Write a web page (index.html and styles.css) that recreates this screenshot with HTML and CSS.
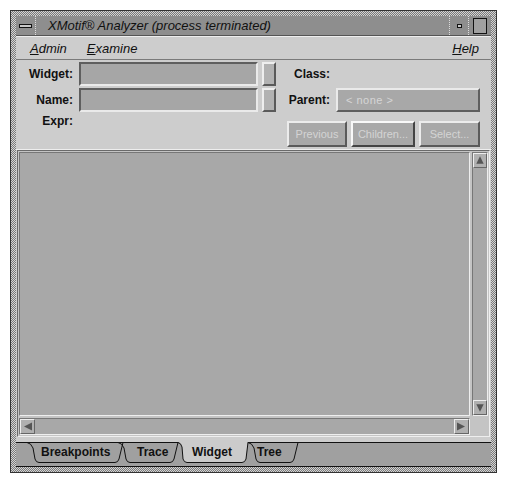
FILE: index.html
```html
<!DOCTYPE html>
<html lang="en">
<head>
    <meta charset="UTF-8">
    <title>XMotif Analyzer</title>
    <link rel="stylesheet" href="styles.css">
</head>
<body>
    <div class="window">
        <div class="titlebar">
            <div class="wm-btn menu-btn"><span class="dash"></span></div>
            <div class="title">XMotif® Analyzer (process terminated)</div>
            <div class="wm-btn min-btn"><span class="dot"></span></div>
            <div class="wm-btn max-btn"><span class="box"></span></div>
        </div>
        <div class="client">
            <div class="menubar">
                <span class="menu"><u>A</u>dmin</span>
                <span class="menu"><u>E</u>xamine</span>
                <span class="menu help"><u>H</u>elp</span>
            </div>

            <div class="form">
                <div class="left-col">
                    <div class="row">
                        <label class="lbl">Widget:</label>
                        <div class="field"></div>
                        <div class="side-btn"></div>
                    </div>
                    <div class="row">
                        <label class="lbl">Name:</label>
                        <div class="field"></div>
                        <div class="side-btn"></div>
                    </div>
                    <div class="row expr-row">
                        <label class="lbl">Expr:</label>
                    </div>
                </div>
                <div class="right-col">
                    <div class="row">
                        <label class="lbl rlbl">Class:</label>
                    </div>
                    <div class="row">
                        <label class="lbl rlbl">Parent:</label>
                        <div class="field parent-field"><span class="disabled">&lt; none &gt;</span></div>
                    </div>
                    <div class="row btn-row">
                        <div class="pbtn prev">Previous</div>
                        <div class="pbtn children">Children...</div>
                        <div class="pbtn select">Select...</div>
                    </div>
                </div>
            </div>

            <div class="scrolled">
                <div class="view-row">
                    <div class="canvas"></div>
                    <div class="vscroll">
                        <div class="arrow"><svg width="13" height="13" viewBox="0 0 13 13"><path d="M6.5 2 L10.5 10 L2.5 10 Z" fill="#555"/></svg></div>
                        <div class="track"></div>
                        <div class="arrow"><svg width="13" height="13" viewBox="0 0 13 13"><path d="M2.5 3 L10.5 3 L6.5 11 Z" fill="#555"/></svg></div>
                    </div>
                </div>
                <div class="hscroll-row">
                    <div class="hscroll">
                        <div class="arrow"><svg width="13" height="13" viewBox="0 0 13 13"><path d="M11 2.5 L11 10.5 L3 6.5 Z" fill="#555"/></svg></div>
                        <div class="track"></div>
                        <div class="arrow"><svg width="13" height="13" viewBox="0 0 13 13"><path d="M2 2.5 L2 10.5 L10 6.5 Z" fill="#555"/></svg></div>
                    </div>
                    <div class="corner"></div>
                </div>
            </div>

            <div class="tabstrip">
                <svg class="tab-shapes" width="475" height="27" viewBox="0 0 475 27">
                    <path d="M0 2.5 H475" stroke="#111" stroke-width="1"/>
                    <path d="M162 0 H232 L230 19 Q229 22.5 226 22.5 H171 Q168 22.5 167 19 L166 7 Q165 2.5 162 2.5 Z" fill="#cbcbcb"/>
                    <path d="M162 2.5 Q165 3 166 7 L167 19 Q168 22.5 171 22.5 H226 Q229 22.5 230 19 L232 2.5" fill="none" stroke="#111"/>
                    <path d="M11 2.5 Q15 3 17 8 L19 19 Q20 22.5 23 22.5 H99 Q102 22.5 103 19 L107 2.5" fill="none" stroke="#111"/>
                    <path d="M102 2.5 Q106 3 108 8 L110 19 Q111 22.5 114 22.5 H154 Q157 22.5 158 19 L162 2.5" fill="none" stroke="#111"/>
                    <path d="M232 2.5 Q236 3 238 8 L240 19 Q241 22.5 244 22.5 H274 Q277 22.5 278 19 L282 2.5" fill="none" stroke="#111"/>
                </svg>
                <div class="tab-labels">
                    <span class="tab t1">Breakpoints</span>
                    <span class="tab t2">Trace</span>
                    <span class="tab t3">Widget</span>
                    <span class="tab t4">Tree</span>
                </div>
            </div>
        </div>
    </div>
</body>
</html>
```

FILE: styles.css
```css
* {
    box-sizing: border-box;
}

body {
    margin: 0;
    background: #fff;
    font-family: 'Liberation Sans', Arial, sans-serif;
}

.window {
    margin: 10px;
    width: 487px;
    height: 463px;
    padding: 5px;
    border: 1px solid #333;
    background: repeating-conic-gradient(#7a7a7a 0 25%, #d4d4d4 0 50%) 0 0 / 2px 2px;
    display: flex;
    flex-direction: column;
}

/* title bar */
.titlebar {
    height: 20px;
    display: flex;
    align-items: stretch;
    background: #8e8e8e;
    border-bottom: 1px solid #555;
}

.wm-btn {
    display: flex;
    align-items: center;
    justify-content: center;
    background: #8e8e8e;
}

.menu-btn {
    width: 20px;
    border-right: 1px dotted #ddd;
}

.menu-btn .dash {
    width: 13px;
    height: 4px;
    border: 1px solid #111;
    background: #c8c8c8;
}

.title {
    flex: 1;
    padding-left: 12px;
    font-style: italic;
    font-size: 13px;
    line-height: 20px;
    color: #111;
    white-space: nowrap;
}

.min-btn {
    width: 19px;
    border-left: 1px dotted #ddd;
}

.min-btn .dot {
    width: 5px;
    height: 4px;
    border: 1px solid #111;
    background: #c8c8c8;
}

.max-btn {
    width: 23px;
    border-left: 1px dotted #ddd;
}

.max-btn .box {
    width: 14px;
    height: 16px;
    border: 1px solid #111;
    background: #a0a0a0;
}

/* client */
.client {
    flex: 1;
    background: #cdcdcd;
    display: flex;
    flex-direction: column;
}

.menubar {
    height: 24px;
    display: flex;
    align-items: center;
    padding: 0 12px 0 14px;
    border-top: 1px solid #eee;
    border-bottom: 1px solid #7a7a7a;
    font-style: italic;
    font-size: 13px;
    color: #111;
}

.menu {
    margin-right: 20px;
}

.menu.help {
    margin-left: auto;
    margin-right: 0;
}

.menu u {
    text-decoration-thickness: 1px;
}

/* form */
.form {
    height: 90px;
    display: flex;
    padding-top: 2px;
    border-bottom: 1px solid #eee;
}

.left-col {
    width: 264px;
}

.row {
    display: flex;
    align-items: center;
    height: 24px;
    margin-bottom: 2px;
}

.lbl {
    font-size: 12px;
    font-weight: bold;
    color: #111;
    text-align: right;
}

.left-col .lbl {
    width: 57px;
    margin-right: 6px;
}

.expr-row {
    margin-top: 1px;
    height: 20px;
    align-items: flex-start;
}

.field {
    width: 179px;
    height: 24px;
    background: #a6a6a6;
    border: 2px solid;
    border-color: #5e5e5e #eaeaea #eaeaea #5e5e5e;
}

.side-btn {
    width: 14px;
    height: 24px;
    margin-left: 4px;
    background: #b2b2b2;
    border: 2px solid;
    border-color: #eeeeee #5a5a5a #5a5a5a #eeeeee;
}

.right-col {
    width: 210px;
}

.rlbl {
    width: 50px;
    margin-right: 6px;
}

.parent-field {
    width: 144px;
    background: #a8a8a8;
    border-color: #eaeaea #5e5e5e #5e5e5e #eaeaea;
    display: flex;
    align-items: center;
    padding-left: 8px;
}

.disabled {
    font-size: 11px;
    color: #d6d6d6;
    letter-spacing: 0.5px;
}

.btn-row {
    margin-top: 9px;
    height: 26px;
    padding-left: 7px;
}

.pbtn {
    height: 26px;
    margin-right: 4px;
    display: flex;
    align-items: center;
    justify-content: center;
    font-size: 11px;
    color: #d4d4d4;
    background: #a8a8a8;
    border: 2px solid;
    border-color: #ececec #5a5a5a #5a5a5a #ececec;
}

.prev { width: 60px; }
.children { width: 64px; border-color: #f8f8f8 #444 #444 #f8f8f8; }
.select { width: 61px; margin-right: 0; }

/* scrolled window */
.scrolled {
    height: 287px;
    margin: 0 1px;
    padding: 1px;
    border: 1px solid;
    border-color: #6a6a6a #eee #eee #6a6a6a;
    background: #c4c4c4;
    display: flex;
    flex-direction: column;
}

.view-row {
    flex: 1;
    display: flex;
}

.canvas {
    flex: 1;
    background: #a8a8a8;
    border: 1px solid;
    border-color: #777 #eee #eee #777;
}

.vscroll {
    width: 16px;
    margin-left: 2px;
    display: flex;
    flex-direction: column;
    background: #a8a8a8;
    border: 1px solid;
    border-color: #777 #eee #eee #777;
}

.hscroll-row {
    height: 17px;
    margin-top: 2px;
    display: flex;
}

.hscroll {
    flex: 1;
    display: flex;
    background: #a8a8a8;
    border: 1px solid;
    border-color: #777 #eee #eee #777;
}

.corner {
    width: 18px;
}

.track {
    flex: 1;
}

.arrow {
    width: 14px;
    height: 15px;
    display: flex;
    align-items: center;
    justify-content: center;
    background: #b0b0b0;
    border: 1px solid;
    border-color: #eee #666 #666 #eee;
}

.hscroll .arrow {
    width: 15px;
    height: 15px;
}

/* tab strip */
.tabstrip {
    position: relative;
    flex: 1;
    margin-top: 3px;
    background: linear-gradient(#cdcdcd 0 3px, #a0a0a0 3px);
    border-bottom: 1px solid #111;
}

.tab-shapes {
    position: absolute;
    left: 0;
    top: 0;
}

.tab-labels {
    position: relative;
    display: flex;
    height: 100%;
    align-items: center;
    padding-left: 25px;
    padding-bottom: 2px;
    font-size: 12px;
    font-weight: bold;
    color: #111;
}

.tab { display: block; }
.t1 { width: 96px; }
.t2 { width: 55px; }
.t3 { width: 65px; }
.t4 { width: 40px; }
```
